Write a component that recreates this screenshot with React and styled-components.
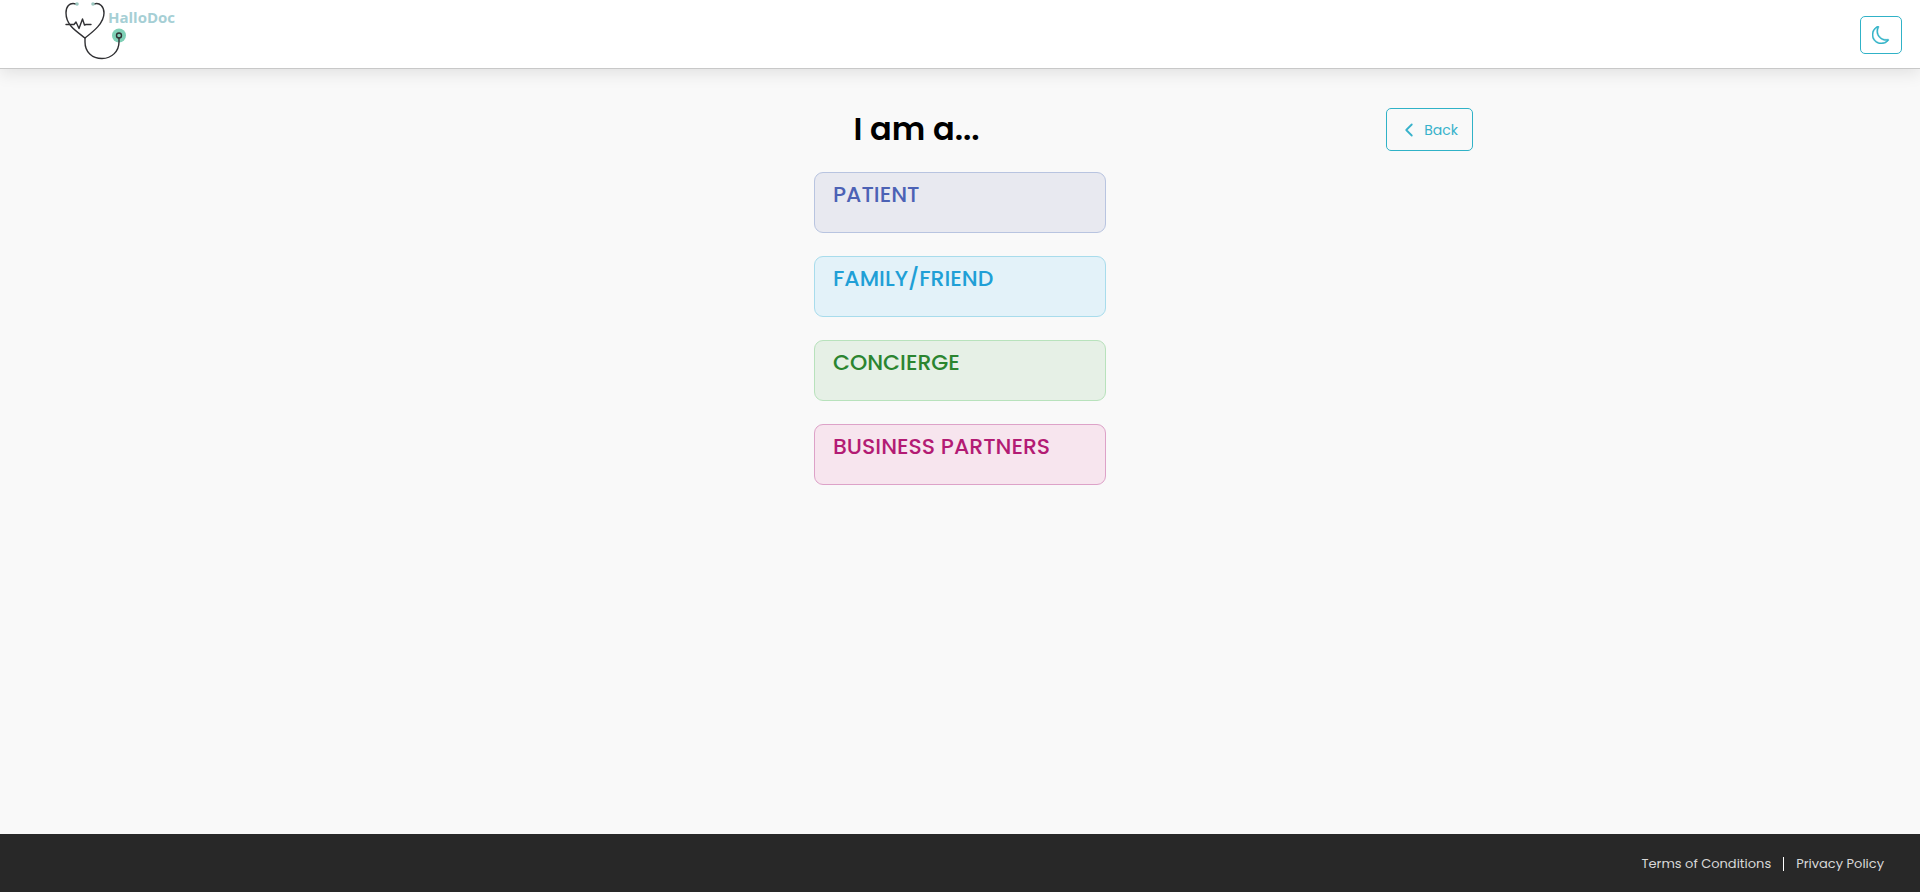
import React from "react";
import styled, { createGlobalStyle } from "styled-components";
import { BsMoon } from "react-icons/bs";
import { ChevronLeft } from "lucide-react";

const GlobalStyle = createGlobalStyle`
  * { box-sizing: border-box; }
  body {
    margin: 0;
    background: #f9f9f9;
    color: #000;
    font-family: Poppins, Inter, "Liberation Sans", sans-serif;
  }
`;

const Page = styled.div`
  min-height: 100vh;
  display: flex;
  flex-direction: column;
`;

const Header = styled.header`
  display: flex;
  align-items: center;
  justify-content: space-between;
  height: 69px;
  padding: 2px 18px 0 64px;
  background: #fff;
  border-bottom: 1px solid #c8c8c8;
  box-shadow: 0 4px 16px rgba(0, 0, 0, 0.1);
`;

const Logo = styled.a`
  display: flex;
  align-items: flex-start;
`;

const ThemeButton = styled.button`
  display: flex;
  align-items: center;
  justify-content: center;
  width: 42px;
  height: 38px;
  padding: 0;
  color: #30b2c7;
  background: #fff;
  border: 1px solid #30b2c7;
  border-radius: 5px;
  cursor: pointer;
`;

const Main = styled.main`
  flex: 1;
  width: 100%;
  max-width: 1026px;
  margin: 0 auto;
  padding: 39px 0;
`;

const TitleRow = styled.div`
  display: flex;
  align-items: center;
  margin-bottom: 21px;
`;

const Title = styled.h1`
  flex: 1;
  margin: 0;
  padding-bottom: 2px;
  font-size: 32px;
  line-height: 40px;
  font-weight: 600;
  text-align: center;
`;

const BackButton = styled.button`
  display: flex;
  align-items: center;
  gap: 4px;
  height: 43px;
  padding: 0 14px 0 11px;
  color: #38b2cb;
  font-family: inherit;
  font-size: 14px;
  line-height: 20px;
  background: transparent;
  border: 1px solid #30b2c7;
  border-radius: 5px;
  cursor: pointer;
`;

const Options = styled.nav`
  display: flex;
  flex-direction: column;
  gap: 23px;
  width: 292px;
  margin: 0 auto;
`;

const Option = styled.a`
  height: 61px;
  padding: 6px 18px;
  color: ${(p) => p.$text};
  font-size: 22px;
  line-height: 32px;
  font-weight: 500;
  text-decoration: none;
  background: ${(p) => p.$fill};
  border: 1px solid ${(p) => p.$edge};
  border-radius: 9px;
`;

const Footer = styled.footer`
  display: flex;
  align-items: center;
  justify-content: flex-end;
  gap: 12px;
  height: 58px;
  padding: 2px 36px 0;
  background: #282828;
`;

const FooterLink = styled.a`
  color: #d8d8d8;
  font-size: 13px;
  line-height: 20px;
  text-decoration: none;
`;

const Divider = styled.span`
  width: 1px;
  height: 14px;
  background: #fff;
`;

const LogoName = styled.text`
  font-family: "Open Sans", sans-serif;
  font-size: 15px;
  font-weight: 700;
`;

const options = [
  { label: "PATIENT", text: "#4c62b5", fill: "#e8e9f0", edge: "#b8c4e0" },
  { label: "FAMILY/FRIEND", text: "#209fd6", fill: "#e3f2f9", edge: "#a8dcec" },
  { label: "CONCIERGE", text: "#2b8530", fill: "#e6f0e6", edge: "#b8e2bc" },
  { label: "BUSINESS PARTNERS", text: "#b31b74", fill: "#f7e5ee", edge: "#dda2c8" },
];

function HalloDocLogo() {
  return (
    <svg width="116" height="66" viewBox="0 2 116 66" fill="none" role="img" aria-label="HalloDoc">
      <circle cx="55" cy="35.5" r="7" fill="#7fd0b6" />
      <g stroke="#303033" strokeWidth="1.4" strokeLinecap="round" strokeLinejoin="round">
        <path d="M12 4C5 2 2 7 2 13C2 25 12 31 21 38C30 31 40 23 40 13C40 7 36 2 30 4" />
        <path d="M21 38V42C21 52 28 58.500 38 58.500C48 58.500 55 51 55 42V38" />
        <path d="M2 24.500H10L12 22L15 28.500L18.500 19L20.500 25L22 24.500H27" />
        <circle cx="55" cy="35.500" r="2.500" />
      </g>
      <circle cx="13" cy="4" r="1.800" fill="#9dc9c1" />
      <circle cx="29" cy="4" r="1.800" fill="#9dc9c1" />
      <LogoName x="44" y="23" fill="#a6cfd5">HalloDoc</LogoName>
    </svg>
  );
}

export default function App() {
  return (
    <Page>
      <GlobalStyle />
      <Header>
        <Logo href="#">
          <HalloDocLogo />
        </Logo>
        <ThemeButton type="button" aria-label="Toggle dark mode">
          <BsMoon size={18} strokeWidth={0.4} />
        </ThemeButton>
      </Header>
      <Main>
        <TitleRow>
          <Title>I am a...</Title>
          <BackButton type="button">
            <ChevronLeft size={22} strokeWidth={2} />
            Back
          </BackButton>
        </TitleRow>
        <Options aria-label="Request type">
          {options.map((o) => (
            <Option key={o.label} href="#" $text={o.text} $fill={o.fill} $edge={o.edge}>
              {o.label}
            </Option>
          ))}
        </Options>
      </Main>
      <Footer>
        <FooterLink href="#">Terms of Conditions</FooterLink>
        <Divider />
        <FooterLink href="#">Privacy Policy</FooterLink>
      </Footer>
    </Page>
  );
}
